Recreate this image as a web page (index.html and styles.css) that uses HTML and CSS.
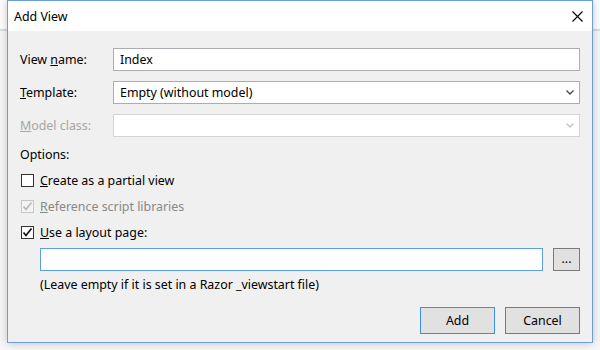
FILE: index.html
```html
<!DOCTYPE html>
<html lang="en">
<head>
    <meta charset="UTF-8">
    <title>Add View</title>
    <link rel="stylesheet" href="styles.css">
</head>
<body>

<div class="dialog">
    <div class="titlebar">
        <span class="title">Add View</span>
        <svg class="close" width="11" height="11" viewBox="0 0 11 11">
            <path d="M0.5 0.5 L10.5 10.5 M10.5 0.5 L0.5 10.5" stroke="#000" stroke-width="1.1" fill="none"/>
        </svg>
    </div>

    <div class="body">
        <div class="form-grid">
            <label class="field-label">View <u>n</u>ame:</label>
            <div class="textbox">Index</div>

            <label class="field-label"><u>T</u>emplate:</label>
            <div class="combo">
                <span>Empty (without model)</span>
                <svg class="chevron" width="8" height="5" viewBox="0 0 8 5">
                    <path d="M0.5 0.5 L4 4 L7.5 0.5" stroke="#444" stroke-width="1.3" fill="none"/>
                </svg>
            </div>

            <label class="field-label disabled"><u>M</u>odel class:</label>
            <div class="combo combo-disabled">
                <span></span>
                <svg class="chevron" width="8" height="5" viewBox="0 0 8 5">
                    <path d="M0.5 0.5 L4 4 L7.5 0.5" stroke="#c4c4c4" stroke-width="1.3" fill="none"/>
                </svg>
            </div>
        </div>

        <div class="options-title">Options:</div>

        <div class="check-row">
            <span class="checkbox"></span>
            <span><u>C</u>reate as a partial view</span>
        </div>
        <div class="check-row check-disabled">
            <span class="checkbox">
                <svg width="11" height="11" viewBox="0 0 11 11">
                    <path d="M1.5 5.5 L4 8.5 L9.5 1.5" stroke="#b8b8b8" stroke-width="1.7" fill="none"/>
                </svg>
            </span>
            <span><u>R</u>eference script libraries</span>
        </div>
        <div class="check-row">
            <span class="checkbox">
                <svg width="11" height="11" viewBox="0 0 11 11">
                    <path d="M1.5 5.5 L4 8.5 L9.5 1.5" stroke="#111" stroke-width="1.7" fill="none"/>
                </svg>
            </span>
            <span><u>U</u>se a layout page:</span>
        </div>

        <div class="layout-row">
            <div class="textbox textbox-focus"></div>
            <div class="browse">...</div>
        </div>
        <div class="hint">(Leave empty if it is set in a Razor _viewstart file)</div>

        <div class="buttons">
            <div class="btn btn-default">Add</div>
            <div class="btn">Cancel</div>
        </div>
    </div>
</div>

</body>
</html>
```

FILE: styles.css
```css
body {
    margin: 0;
    padding: 0;
    font-family: 'Noto Sans', 'Open Sans', sans-serif;
    font-size: 12.4px;
    color: #000;
    background: linear-gradient(to bottom, #fdfdfd 0, #fdfdfd 29px, #dcdcdc 29px, #dcdcdc 31px, #f6f6f6 31px);
    height: 350px;
    overflow: hidden;
}
.dialog {
    margin-left: 7px;
    width: 584px;
    height: 341px;
    border: 1px solid #6a9fdf;
    background: #f0f0f0;
    box-shadow: 0 0 8px rgba(0, 0, 0, 0.22);
    display: flex;
    flex-direction: column;
}
.titlebar {
    height: 30px;
    background: #fff;
    display: flex;
    align-items: center;
    justify-content: space-between;
    padding: 0 9px 0 6px;
}
.body {
    flex: 1;
    padding: 17px 12px 0 12px;
}
.form-grid {
    display: grid;
    grid-template-columns: 93px 1fr;
    row-gap: 10px;
    align-items: center;
}
.field-label {
    display: block;
}
.disabled {
    color: #a6a6a6;
}
.textbox,
.combo {
    height: 21px;
    border: 1px solid #abadb3;
    background: #fff;
    box-sizing: content-box;
    padding: 0 6px;
    display: flex;
    align-items: center;
}
.combo {
    justify-content: space-between;
    padding-right: 5px;
}
.combo-disabled {
    border-color: #d4d4d4;
}
.textbox-focus {
    border-color: #5b9ee6;
}
.options-title {
    margin-top: 10px;
    height: 16px;
    line-height: 16px;
}
.check-row {
    display: flex;
    align-items: center;
    margin-top: 10px;
    height: 15px;
}
.check-row + .check-row {
    margin-top: 11px;
}
.checkbox {
    width: 11px;
    height: 11px;
    border: 1px solid #333;
    background: #fff;
    margin-left: 1px;
    margin-right: 6px;
    display: flex;
}
.check-disabled {
    color: #888;
}
.check-disabled .checkbox {
    border-color: #c6c6c6;
    background: #f4f4f4;
}
.layout-row {
    display: flex;
    margin-top: 8px;
    margin-left: 20px;
    gap: 10px;
}
.layout-row .textbox {
    flex: 1;
}
.browse {
    width: 25px;
    height: 21px;
    border: 1px solid #7a7a7a;
    background: #e1e1e1;
    display: flex;
    align-items: center;
    justify-content: center;
    line-height: 1;
}
.hint {
    margin-left: 20px;
    margin-top: 5px;
    height: 17px;
    line-height: 17px;
}
.buttons {
    display: flex;
    justify-content: flex-end;
    gap: 10px;
    margin-top: 14px;
}
.btn {
    width: 73px;
    height: 25px;
    border: 1px solid #7a7a7a;
    background: #e1e1e1;
    display: flex;
    align-items: center;
    justify-content: center;
}
.btn-default {
    border-color: #3c8fe6;
}
```
